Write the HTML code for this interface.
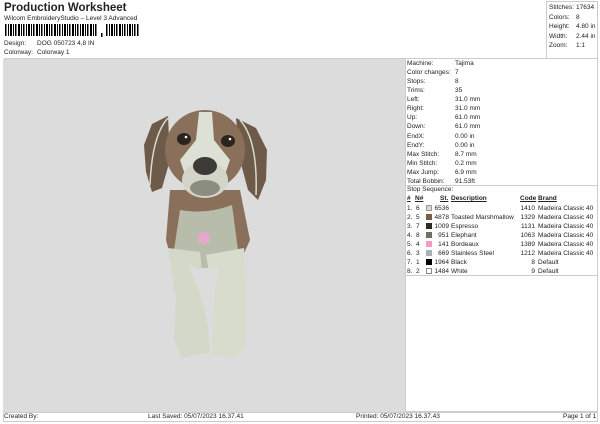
<!DOCTYPE html>
<html><head><meta charset="utf-8"><style>
*{margin:0;padding:0;box-sizing:border-box}
body{width:600px;height:424px;background:#fff;font-family:"Liberation Sans",Arial,sans-serif;color:#222;position:relative;overflow:hidden;font-size:7px}
.a{position:absolute;white-space:nowrap;line-height:8px}
.r{text-align:right}
</style></head><body>
<div class="a" style="left:4px;top:2px;font-size:11.5px;font-weight:bold;line-height:13px">Production Worksheet</div>
<div class="a" style="left:4px;top:15px;font-size:6.5px">Wilcom EmbroideryStudio – Level 3 Advanced</div>
<svg class="a" style="left:5px;top:24px" width="135" height="14">
<g fill="#000">
<rect x="0" y="0" width="1.5" height="12"/><rect x="3" y="0" width="1" height="12"/><rect x="5" y="0" width="2" height="12"/><rect x="8" y="0" width="1" height="12"/><rect x="10" y="0" width="1.5" height="12"/><rect x="13" y="0" width="2" height="12"/><rect x="16" y="0" width="1" height="12"/><rect x="18" y="0" width="1.5" height="12"/><rect x="21" y="0" width="1" height="12"/><rect x="23" y="0" width="2" height="12"/><rect x="26" y="0" width="1" height="12"/><rect x="28" y="0" width="1.5" height="12"/><rect x="31" y="0" width="2" height="12"/><rect x="34" y="0" width="1" height="12"/><rect x="36" y="0" width="1.5" height="12"/><rect x="39" y="0" width="1" height="12"/><rect x="41" y="0" width="2" height="12"/><rect x="44" y="0" width="1" height="12"/><rect x="46" y="0" width="1.5" height="12"/><rect x="49" y="0" width="2" height="12"/><rect x="52" y="0" width="1" height="12"/><rect x="54" y="0" width="1.5" height="12"/><rect x="57" y="0" width="1" height="12"/><rect x="59" y="0" width="2" height="12"/><rect x="62" y="0" width="1" height="12"/><rect x="64" y="0" width="1.5" height="12"/><rect x="67" y="0" width="2" height="12"/><rect x="70" y="0" width="1" height="12"/><rect x="72" y="0" width="1.5" height="12"/><rect x="75" y="0" width="1" height="12"/><rect x="77" y="0" width="2" height="12"/><rect x="80" y="0" width="1" height="12"/><rect x="82" y="0" width="1.5" height="12"/><rect x="85" y="0" width="2" height="12"/><rect x="88" y="0" width="1" height="12"/><rect x="90" y="0" width="1.5" height="12"/>
<rect x="96" y="9" width="1.5" height="4"/>
<rect x="101" y="0" width="1.5" height="12"/><rect x="104" y="0" width="1" height="12"/><rect x="106" y="0" width="2" height="12"/><rect x="109" y="0" width="1" height="12"/><rect x="111" y="0" width="1.5" height="12"/><rect x="114" y="0" width="2" height="12"/><rect x="117" y="0" width="1" height="12"/><rect x="119" y="0" width="1.5" height="12"/><rect x="122" y="0" width="1" height="12"/><rect x="124" y="0" width="2" height="12"/><rect x="127" y="0" width="1" height="12"/><rect x="129" y="0" width="1.5" height="12"/><rect x="132" y="0" width="1.5" height="12"/>
</g></svg>
<div class="a" style="left:4px;top:40px;font-size:6.5px">Design:</div>
<div class="a" style="left:37px;top:40px;font-size:6.5px">DOG 050723 4,8 IN</div>
<div class="a" style="left:4px;top:49px;font-size:6.5px">Colorway:</div>
<div class="a" style="left:37px;top:49px;font-size:6.5px">Colorway 1</div>

<div class="a" style="left:546px;top:1px;width:52px;height:57px;border:1px solid #ccc;border-bottom:none"></div>
<div class="a" style="left:4px;top:58px;width:594px;height:1px;background:#ccc"></div>
<div class="a" style="left:549px;top:3px;font-size:6.5px;line-height:9.5px">Stitches:<br>Colors:<br>Height:<br>Width:<br>Zoom:</div>
<div class="a" style="left:576px;top:3px;font-size:6.5px;line-height:9.5px">17634<br>8<br>4.80 in<br>2.44 in<br>1:1</div>

<div class="a" style="left:3px;top:59px;width:403px;height:353px;background:#dcdcdc"></div>
<div class="a" style="left:405px;top:59px;width:193px;height:353px;border:1px solid #ccc;border-top:none"></div>
<div class="a" style="left:405px;top:185px;width:193px;height:1px;background:#ccc"></div>
<div class="a" style="left:405px;top:275px;width:193px;height:1px;background:#ccc"></div>

<div class="a" style="left:407px;top:59px;font-size:6.5px;line-height:9.07px">Machine:<br>Color changes:<br>Stops:<br>Trims:<br>Left:<br>Right:<br>Up:<br>Down:<br>EndX:<br>EndY:<br>Max Stitch:<br>Min Stitch:<br>Max Jump:<br>Total Bobbin:</div>
<div class="a" style="left:455px;top:59px;font-size:6.5px;line-height:9.07px">Tajima<br>7<br>8<br>35<br>31.0 mm<br>31.0 mm<br>61.0 mm<br>61.0 mm<br>0.00 in<br>0.00 in<br>8.7 mm<br>0.2 mm<br>6.9 mm<br>91.53ft</div>
<div class="a" style="left:407px;top:186px;font-size:6.5px">Stop Sequence:</div>

<div style="position:absolute;left:407px;top:195px;font-size:6.5px;line-height:9px">
<div class="a" style="left:0;top:0;font-weight:bold;text-decoration:underline">#</div>
<div class="a" style="left:8px;top:0;font-weight:bold;text-decoration:underline">N#</div>
<div class="a" style="left:33px;top:0;font-weight:bold;text-decoration:underline">St.</div>
<div class="a" style="left:44px;top:0;font-weight:bold;text-decoration:underline">Description</div>
<div class="a" style="left:113px;top:0;font-weight:bold;text-decoration:underline">Code</div>
<div class="a" style="left:131px;top:0;font-weight:bold;text-decoration:underline">Brand</div>
</div>
<div style="position:absolute;left:407px;top:204px;font-size:6.5px;line-height:9px;width:191px">
<div class="a" style="left:0;top:0;line-height:9px">1.&nbsp;&nbsp;6<br>2.&nbsp;&nbsp;5<br>3.&nbsp;&nbsp;7<br>4.&nbsp;&nbsp;8<br>5.&nbsp;&nbsp;4<br>6.&nbsp;&nbsp;3<br>7.&nbsp;&nbsp;1<br>8.&nbsp;&nbsp;2</div>
<div class="a r" style="left:26px;top:0;width:16px;line-height:9px">6536<br>4878<br>1009<br>951<br>141<br>669<br>1964<br>1484</div>
<div class="a" style="left:44px;top:0;line-height:9px"><br>Toasted Marshmallow<br>Espresso<br>Elephant<br>Bordeaux<br>Stainless Steel<br>Black<br>White</div>
<div class="a r" style="left:100px;top:0;width:28px;line-height:9px">1410<br>1329<br>1131<br>1063<br>1389<br>1212<br>8<br>9</div>
<div class="a" style="left:131px;top:0;line-height:9px">Madeira Classic 40<br>Madeira Classic 40<br>Madeira Classic 40<br>Madeira Classic 40<br>Madeira Classic 40<br>Madeira Classic 40<br>Default<br>Default</div>
<div class="a" style="left:19px;top:1px;width:6px;height:6px;background:#d9d9d0;border:1px solid #999"></div>
<div class="a" style="left:19px;top:10px;width:6px;height:6px;background:#7a5c48"></div>
<div class="a" style="left:19px;top:19px;width:6px;height:6px;background:#2b2a24"></div>
<div class="a" style="left:19px;top:28px;width:6px;height:6px;background:#6f6f62"></div>
<div class="a" style="left:19px;top:37px;width:6px;height:6px;background:#f09ac8"></div>
<div class="a" style="left:19px;top:46px;width:6px;height:6px;background:#a8b0b8"></div>
<div class="a" style="left:19px;top:55px;width:6px;height:6px;background:#000"></div>
<div class="a" style="left:19px;top:64px;width:6px;height:6px;background:#fff;border:1px solid #888"></div>
</div>

<svg class="a" style="left:0;top:0" width="600" height="412">
<path d="M168,116 L152,124 L144,145 L146,172 L152,192 L162,188 L170,160 Z" fill="#6e5a48"/>
<path d="M236,118 L256,128 L267,150 L266,180 L258,200 L248,190 L240,160 Z" fill="#6e5a48"/>
<path d="M168,118 Q152,135 150,185" stroke="#d8dccf" stroke-width="1.5" fill="none"/>
<path d="M240,120 Q258,140 256,195" stroke="#d8dccf" stroke-width="1.5" fill="none"/>
<ellipse cx="205" cy="150" rx="40" ry="40" fill="#8a705a"/>
<path d="M170,190 L240,190 L250,240 L240,262 L172,262 L166,240 Z" fill="#8a705a"/>
<path d="M180,210 Q205,215 232,205 L238,250 L224,268 L186,268 L174,250 Z" fill="#b8bcaa"/>
<path d="M199,112 L212,112 L214,140 L230,160 L218,195 L192,195 L180,160 L196,140 Z" fill="#dde0d4"/>
<ellipse cx="205" cy="180" rx="23" ry="18" fill="#d2d5c8"/>
<ellipse cx="205" cy="188" rx="15" ry="8" fill="#8c8d80"/>
<ellipse cx="205" cy="166" rx="12" ry="9" fill="#3c3b36"/>
<ellipse cx="184" cy="139" rx="7" ry="6" fill="#2a241e"/>
<ellipse cx="228" cy="141" rx="7" ry="6" fill="#2a241e"/>
<circle cx="186" cy="137" r="1.3" fill="#fff"/><circle cx="230" cy="139" r="1.3" fill="#fff"/>
<path d="M168,248 L200,252 L204,290 L208,330 L210,352 L182,358 L174,340 L176,300 Z" fill="#d3d8c8"/>
<path d="M206,255 L244,248 L246,300 L246,345 L234,358 L212,354 L214,300 Z" fill="#d7dccc"/>
<path d="M188,264 Q205,274 220,264 L214,300 L208,325 L202,300 Z" fill="#dcdcdc"/>
<circle cx="204" cy="238" r="6" fill="#e6a8cc"/>
</svg>

<div class="a" style="left:3px;top:412px;width:595px;height:10px;border:1px solid #ccc"></div>
<div class="a" style="left:4px;top:413px;font-size:6.5px">Created By:</div>
<div class="a" style="left:148px;top:413px;font-size:6.5px">Last Saved: 05/07/2023 16.37.41</div>
<div class="a" style="left:356px;top:413px;font-size:6.5px">Printed: 05/07/2023 16.37.43</div>
<div class="a" style="left:563px;top:413px;font-size:6.5px">Page 1 of 1</div>
</body></html>
